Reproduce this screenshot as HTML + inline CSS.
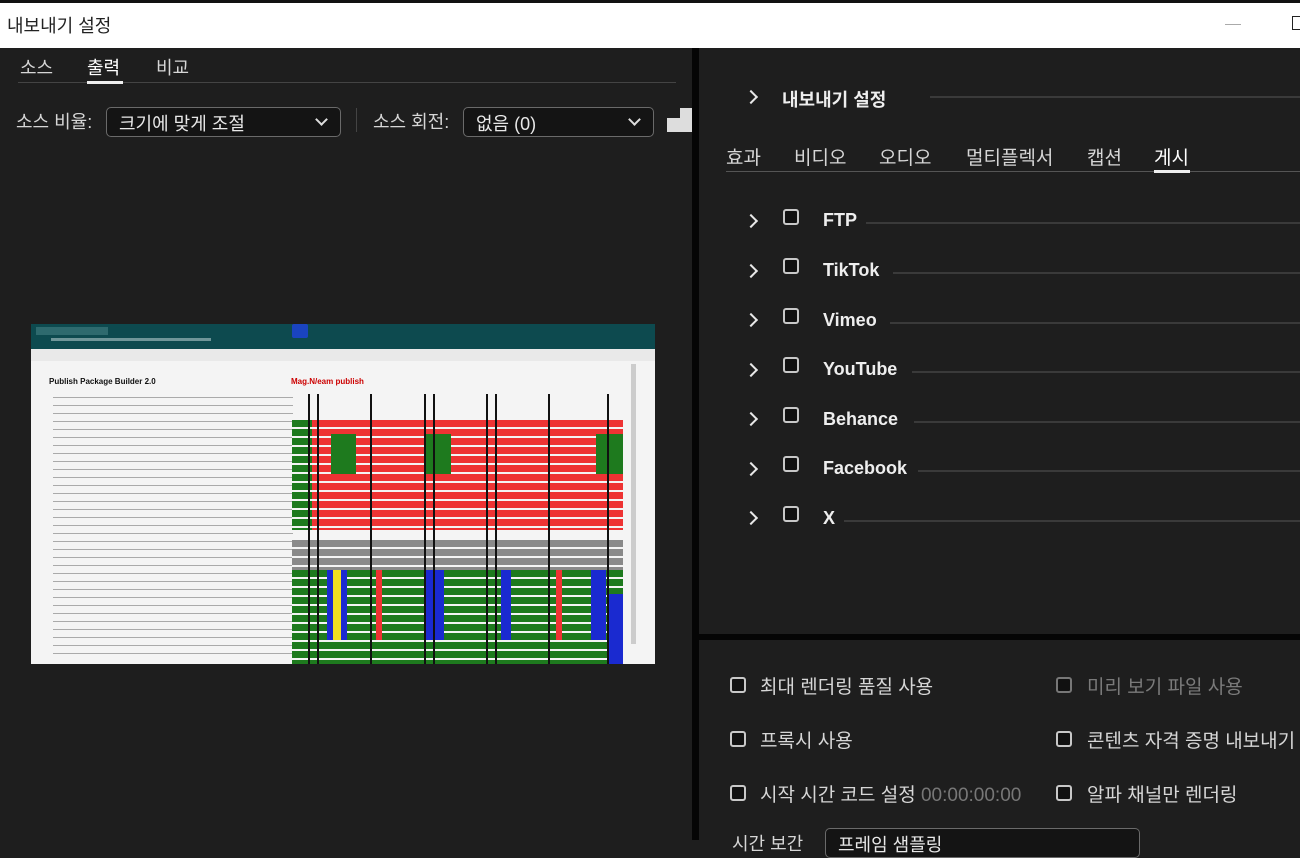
<!DOCTYPE html><html><head><meta charset="utf-8"><style>
*{margin:0;padding:0;box-sizing:border-box}
body{width:1300px;height:840px;overflow:hidden;background:#1e1e1e;font-family:"Liberation Sans","Noto Sans CJK KR",sans-serif;color:#d6d6d6;position:relative}
.a{position:absolute}
.t{font-size:18px;white-space:nowrap}
.b{font-size:19px}
.cb{position:absolute;width:16px;height:16px;border:2px solid #c8c8c8;border-radius:3px;background:#111}
.chev{position:absolute;width:10px;height:10px;border-right:2.5px solid #e8e8e8;border-top:2.5px solid #e8e8e8;transform:rotate(45deg)}
.line{position:absolute;height:2px;background:#3a3a3a}
.dd{position:absolute;height:30px;border:1.5px solid #6a6a6a;border-radius:5px;background:#141414;color:#e8e8e8;font-size:18px;padding:2px 12px}
.dd i{position:absolute;right:14px;top:7px;width:9px;height:9px;border-right:2.5px solid #ddd;border-bottom:2.5px solid #ddd;transform:rotate(45deg)}
.v{position:absolute;top:70px;width:1.5px;height:270px;background:#111}
</style></head><body>
<div class="a" style="left:0;top:0;width:1300px;height:3px;background:#111"></div>
<div class="a" style="left:0;top:3px;width:1300px;height:45px;background:#fff"></div>
<div class="a t" style="left:7px;top:12px;color:#222;font-size:18px">내보내기 설정</div>
<div class="a" style="left:1225px;top:24px;width:16px;height:1px;background:#aaa"></div>
<div class="a" style="left:1292px;top:16px;width:10px;height:14px;border:1.5px solid #222"></div>
<div class="a" style="left:692px;top:48px;width:7px;height:792px;background:#050505"></div>
<div class="a" style="left:699px;top:634px;width:601px;height:6px;background:#050505"></div>
<!-- left tabs -->
<div class="a t" style="left:20px;top:54px">소스</div>
<div class="a t" style="left:87px;top:54px;color:#fff">출력</div>
<div class="a t" style="left:156px;top:54px">비교</div>
<div class="line" style="left:18px;top:82px;width:658px;height:1px;background:#444"></div>
<div class="a" style="left:87px;top:81px;width:36px;height:3px;background:#eee"></div>
<div class="a t" style="left:16px;top:108px">소스 비율:</div>
<div class="dd" style="left:106px;top:107px;width:235px">크기에 맞게 조절<i></i></div>
<div class="a" style="left:356px;top:108px;width:1px;height:24px;background:#444"></div>
<div class="a t" style="left:373px;top:108px">소스 회전:</div>
<div class="dd" style="left:463px;top:107px;width:191px">없음 (0)<i></i></div>
<div class="a" style="left:667px;top:118px;width:25px;height:14px;background:#ddd"></div>
<div class="a" style="left:680px;top:108px;width:12px;height:12px;background:#ddd"></div>
<!-- preview -->
<div class="a" style="left:31px;top:324px;width:624px;height:340px;background:#f4f4f4;overflow:hidden">
 <div class="a" style="left:0;top:0;width:624px;height:25px;background:#0d4a4f"></div>
 <div class="a" style="left:5px;top:3px;width:72px;height:8px;background:#2e6a6e"></div>
 <div class="a" style="left:261px;top:0;width:16px;height:14px;background:#1a44c0;border-radius:2px"></div>
 <div class="a" style="left:20px;top:14px;width:160px;height:3px;background:#6f9699"></div>
 <div class="a" style="left:0;top:25px;width:624px;height:12px;background:#e9e9e9"></div>
 <div class="a" style="left:18px;top:53px;font-size:8px;color:#111;font-weight:bold">Publish Package Builder 2.0</div>
 <div class="a" style="left:260px;top:53px;font-size:8px;color:#c00;font-weight:bold">Mag.N/eam publish</div>
 <div class="a" style="left:22px;top:70px;width:240px;height:266px;background:repeating-linear-gradient(#f4f4f4 0 3px,#aaa 3px 4px,#f4f4f4 4px 8px)"></div>
 <div class="a" style="left:261px;top:96px;width:331px;height:110px;background:repeating-linear-gradient(#e33 0 7px,#f4f4f4 7px 9px)"></div>
 <div class="a" style="left:261px;top:96px;width:20px;height:110px;background:repeating-linear-gradient(#1e7a1e 0 7px,#f4f4f4 7px 9px)"></div>
 <div class="a" style="left:300px;top:110px;width:25px;height:40px;background:#1e7a1e"></div>
 <div class="a" style="left:395px;top:110px;width:25px;height:40px;background:#1e7a1e"></div>
 <div class="a" style="left:565px;top:110px;width:27px;height:40px;background:#1e7a1e"></div>
 <div class="a" style="left:261px;top:216px;width:331px;height:30px;background:repeating-linear-gradient(#8a8a8a 0 7px,#f4f4f4 7px 9px)"></div>
 <div class="a" style="left:261px;top:246px;width:331px;height:94px;background:repeating-linear-gradient(#1e7a1e 0 7px,#f4f4f4 7px 9px)"></div>
 <div class="a" style="left:296px;top:246px;width:20px;height:70px;background:#1a2ad0"></div>
 <div class="a" style="left:302px;top:246px;width:8px;height:70px;background:#f0e020"></div>
 <div class="a" style="left:393px;top:246px;width:20px;height:70px;background:#1a2ad0"></div>
 <div class="a" style="left:470px;top:246px;width:10px;height:70px;background:#1a2ad0"></div>
 <div class="a" style="left:345px;top:246px;width:6px;height:70px;background:#e33"></div>
 <div class="a" style="left:525px;top:246px;width:6px;height:70px;background:#e33"></div>
 <div class="a" style="left:560px;top:246px;width:15px;height:70px;background:#1a2ad0"></div>
 <div class="a" style="left:576px;top:270px;width:16px;height:70px;background:#1a2ad0"></div>
 <div class="v" style="left:277px"></div><div class="v" style="left:286px"></div><div class="v" style="left:339px"></div>
 <div class="v" style="left:393px"></div><div class="v" style="left:402px"></div><div class="v" style="left:455px"></div>
 <div class="v" style="left:464px"></div><div class="v" style="left:517px"></div><div class="v" style="left:576px"></div>
 <div class="a" style="left:600px;top:40px;width:5px;height:280px;background:#ccc"></div>
</div>
<!-- right -->
<div class="chev" style="left:746px;top:92px"></div>
<div class="a t" style="left:782px;top:86px;color:#eee;font-weight:bold">내보내기 설정</div>
<div class="line" style="left:930px;top:96px;width:370px"></div>
<div class="a t b" style="left:726px;top:143px">효과</div>
<div class="a t b" style="left:794px;top:143px">비디오</div>
<div class="a t b" style="left:879px;top:143px">오디오</div>
<div class="a t b" style="left:966px;top:143px">멀티플렉서</div>
<div class="a t b" style="left:1087px;top:143px">캡션</div>
<div class="a t b" style="left:1154px;top:143px;color:#fff">게시</div>
<div class="line" style="left:726px;top:171px;width:574px;height:1px;background:#555"></div>
<div class="a" style="left:1154px;top:170px;width:36px;height:3px;background:#eee"></div>
<div class="chev" style="left:746px;top:216px"></div><div class="cb" style="left:783px;top:209px"></div><div class="a t" style="left:823px;top:210px;color:#eee;font-weight:bold">FTP</div><div class="line" style="left:866px;top:222px;width:434px"></div>
<div class="chev" style="left:746px;top:266px"></div><div class="cb" style="left:783px;top:258px"></div><div class="a t" style="left:823px;top:260px;color:#eee;font-weight:bold">TikTok</div><div class="line" style="left:893px;top:272px;width:407px"></div>
<div class="chev" style="left:746px;top:315px"></div><div class="cb" style="left:783px;top:308px"></div><div class="a t" style="left:823px;top:310px;color:#eee;font-weight:bold">Vimeo</div><div class="line" style="left:890px;top:322px;width:410px"></div>
<div class="chev" style="left:746px;top:365px"></div><div class="cb" style="left:783px;top:357px"></div><div class="a t" style="left:823px;top:359px;color:#eee;font-weight:bold">YouTube</div><div class="line" style="left:912px;top:371px;width:388px"></div>
<div class="chev" style="left:746px;top:414px"></div><div class="cb" style="left:783px;top:407px"></div><div class="a t" style="left:823px;top:409px;color:#eee;font-weight:bold">Behance</div><div class="line" style="left:914px;top:421px;width:386px"></div>
<div class="chev" style="left:746px;top:464px"></div><div class="cb" style="left:783px;top:456px"></div><div class="a t" style="left:823px;top:458px;color:#eee;font-weight:bold">Facebook</div><div class="line" style="left:918px;top:470px;width:382px"></div>
<div class="chev" style="left:746px;top:513px"></div><div class="cb" style="left:783px;top:506px"></div><div class="a t" style="left:823px;top:508px;color:#eee;font-weight:bold">X</div><div class="line" style="left:844px;top:520px;width:456px"></div>
<!-- bottom -->
<div class="cb" style="left:730px;top:677px"></div><div class="a t b" style="left:760px;top:672px">최대 렌더링 품질 사용</div>
<div class="cb" style="left:1056px;top:677px;border-color:#777"></div><div class="a t b" style="left:1087px;top:672px;color:#7a7a7a">미리 보기 파일 사용</div>
<div class="cb" style="left:730px;top:731px"></div><div class="a t b" style="left:760px;top:726px">프록시 사용</div>
<div class="cb" style="left:1056px;top:731px"></div><div class="a t b" style="left:1087px;top:726px">콘텐츠 자격 증명 내보내기</div>
<div class="cb" style="left:730px;top:785px"></div><div class="a t b" style="left:760px;top:780px">시작 시간 코드 설정 <span style="color:#777">00:00:00:00</span></div>
<div class="cb" style="left:1056px;top:785px"></div><div class="a t b" style="left:1087px;top:780px">알파 채널만 렌더링</div>
<div class="a t" style="left:732px;top:830px">시간 보간</div>
<div class="dd" style="left:825px;top:828px;width:315px">프레임 샘플링</div>
</body></html>
